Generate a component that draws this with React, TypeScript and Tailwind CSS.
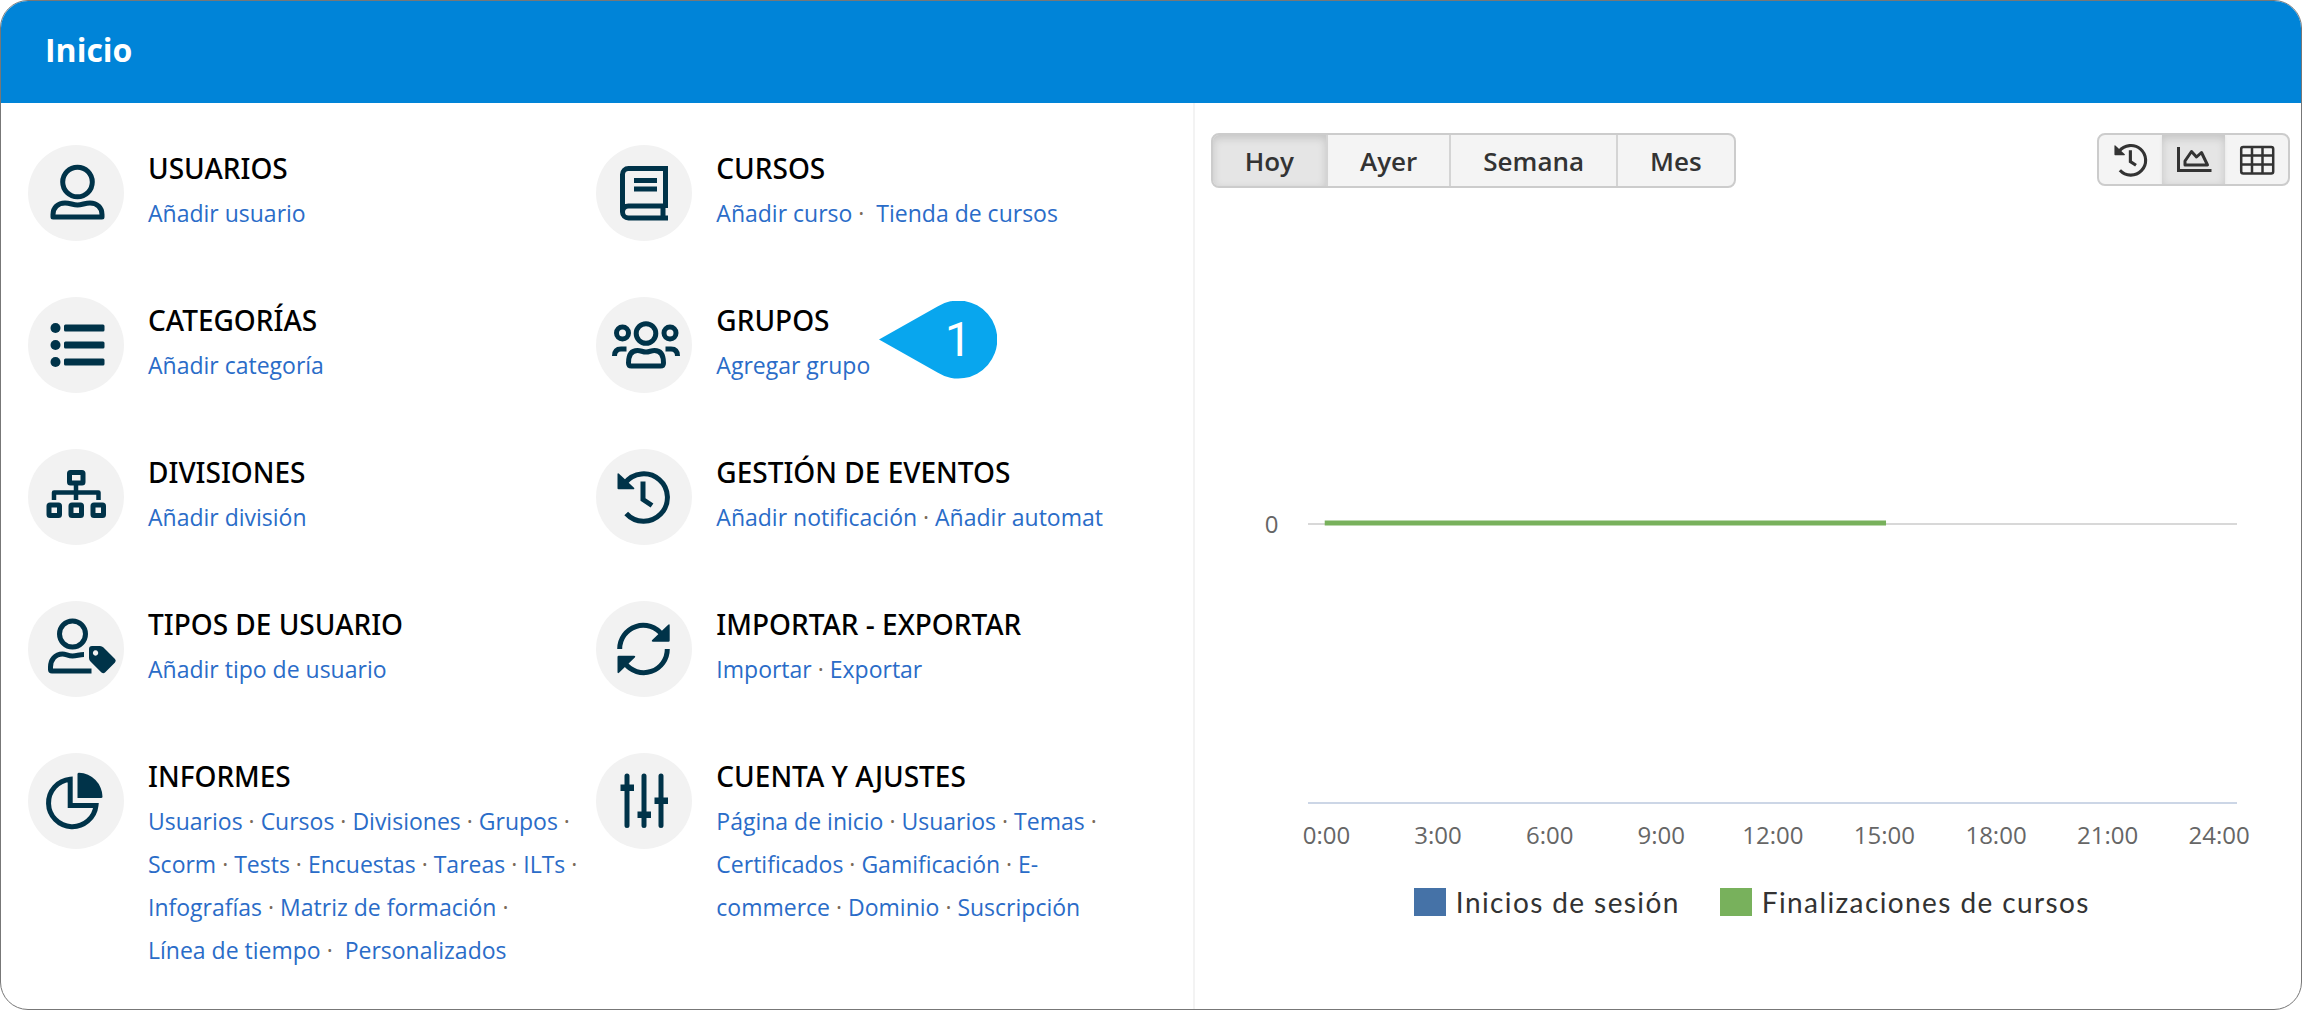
import { useState, type ReactNode } from "react";

/* ── Icons (96×96 grid, same size as the round badge) ─────── */

function Glyph({ children, className = "size-24" }: { children: ReactNode; className?: string }) {
  return (
    <svg viewBox="0 0 96 96" className={className} fill="none" stroke="currentColor" strokeWidth="5" aria-hidden="true">
      {children}
    </svg>
  );
}

const userIcon = (
  <Glyph>
    <circle cx="49.5" cy="37" r="14.8" />
    <path strokeLinejoin="round" d="M25 72h49v-2.500c0-7-5-11.500-12-11.500-5 0-8 2-12.500 2s-7.500-2-12.500-2c-7 0-12 4.500-12 11.500z" />
  </Glyph>
);

const listIcon = (
  <Glyph>
    <g fill="currentColor" stroke="none">
      <circle cx="27.500" cy="31" r="5" />
      <circle cx="27.500" cy="48" r="5" />
      <circle cx="27.500" cy="65" r="5" />
      <rect x="36" y="27.500" width="40.500" height="7" rx="1.500" />
      <rect x="36" y="44.500" width="40.500" height="7" rx="1.500" />
      <rect x="36" y="61.500" width="40.500" height="7" rx="1.500" />
    </g>
  </Glyph>
);

const sitemapIcon = (
  <Glyph>
    <rect x="41.500" y="23.500" width="13.500" height="10.500" rx="1" />
    <path strokeWidth="4.500" strokeLinejoin="round" d="M48 34v17M26 51v-7.500h44.500V51" />
    <rect x="21" y="56" width="10.500" height="10.500" rx="1" />
    <rect x="43" y="56" width="10.500" height="10.500" rx="1" />
    <rect x="65" y="56" width="10.500" height="10.500" rx="1" />
  </Glyph>
);

const userTagIcon = (
  <Glyph>
    <circle cx="44.500" cy="33" r="13" />
    <path d="M56 53.500c-5 0-7 1.500-11.500 1.500s-6.500-2-10-2c-7.500 0-12 6-12 13v2.500q0 1.500 1.500 1.500h39.500" />
    <path
      fill="currentColor"
      stroke="none"
      fillRule="evenodd"
      d="M61 48q0-3 3-3h8q2 0 3.500 1.500l11.500 11.500q1.500 1.500 0 3.500l-10 10q-1.500 1.500-3.500 0L62.500 60.500q-1.500-1.500-1.500-3.500zM67.500 49.300a2.700 2.700 0 1 0 .1 0z"
    />
  </Glyph>
);

const pieIcon = (
  <Glyph>
    <path d="M42.200 26.200A23.800 23.800 0 1 0 68 52.500H42.200z" />
    <path fill="currentColor" stroke="none" d="M51 19.700a24.500 24.500 0 0 1 23.500 24q0 1.300-1.500 1.300H49.500V21q0-1.300 1.500-1.300z" />
  </Glyph>
);

const bookIcon = (
  <Glyph>
    <path d="M69.500 63V23.500H32.500a6 6 0 0 0-6 6V67a6 6 0 0 0 6 6H72" />
    <path d="M26.500 67a6 6 0 0 1 6-6H69.500M67 61v12M38 35.500h23M38 44h23" />
  </Glyph>
);

const groupIcon = (
  <Glyph>
    <circle cx="50" cy="36.500" r="9.800" />
    <circle cx="26.500" cy="36" r="6" />
    <circle cx="74" cy="36" r="6" />
    <path
      strokeLinejoin="round"
      d="M32.500 66c0-8 3-12.500 9-12.500 3.500 0 5 1.500 8.500 1.500s5-1.500 8.500-1.500c6 0 9 4.500 9 12.500q0 3-3 3h-29q-3 0-3-3z"
    />
    <path d="M18.500 59c0-5 2.500-7 6.500-7h5.500M81.500 59c0-5-2.500-7-6.500-7h-5.500" />
  </Glyph>
);

function HistoryIcon({ className }: { className?: string }) {
  return (
    <Glyph className={className}>
      <path d="M29 34a23.700 23.700 0 1 1 1.200 30.500M47 32.500v18l9 6" />
      <path fill="currentColor" stroke="none" d="M21.500 25.500q0-2 1.500-.8l15 14q1 1.500-1 1.500H22.500q-1 0-1-1z" />
    </Glyph>
  );
}

const syncIcon = (
  <Glyph>
    <path d="M23.700 48a23.500 23.500 0 0 1 42.500-14M71.300 48a23.500 23.500 0 0 1-42.500 14" />
    <path
      fill="currentColor"
      stroke="none"
      d="M73.700 24.500v15q0 1.200-1.200 1.200H57q-2-.2-.8-1.700l16-15.300q1.500-1 1.500.8zM21.500 71v-15q0-1.200 1.200-1.200H38q2 .2.800 1.700l-15.800 15.300q-1.500 1-1.500-.8z"
    />
  </Glyph>
);

const slidersIcon = (
  <Glyph>
    <path strokeLinecap="round" d="M31 23v49.500M48 23v49.500M65 23v49.500" />
    <path strokeWidth="6.500" d="M24.500 34.700h13.500M41.500 61.700h13.500M58.500 47.700h13.500" />
  </Glyph>
);

const areaIcon = (
  <svg viewBox="0 0 36 30" className="h-[30px] w-9" fill="none" stroke="currentColor" strokeWidth="3" aria-hidden="true">
    <path d="M2.500 2v23.500H35.500" />
    <path strokeLinejoin="round" d="M9 20v-4l6.500-9.500L20.500 12l5-4.500L31.500 20z" />
  </svg>
);

const tableIcon = (
  <svg viewBox="0 0 36 30" className="h-[30px] w-9" fill="none" stroke="currentColor" strokeWidth="2.500" aria-hidden="true">
    <rect x="2.200" y="2" width="32" height="26.500" rx="2" />
    <path d="M2 10.500h32M2 19.500h32M13 2v26.500M23.500 2v26.500" />
  </svg>
);

/* ── Data ─────────────────────────────────────────────────── */

interface Section {
  title: string;
  icon: ReactNode;
  links: string[];
  // link that has an extra space in front of it
  wide?: string;
  step?: number;
}

const SECTIONS: Section[] = [
  { title: "USUARIOS", icon: userIcon, links: ["Añadir usuario"] },
  { title: "CURSOS", icon: bookIcon, links: ["Añadir curso", "Tienda de cursos"], wide: "Tienda de cursos" },
  { title: "CATEGORÍAS", icon: listIcon, links: ["Añadir categoría"] },
  { title: "GRUPOS", icon: groupIcon, links: ["Agregar grupo"], step: 1 },
  { title: "DIVISIONES", icon: sitemapIcon, links: ["Añadir división"] },
  { title: "GESTIÓN DE EVENTOS", icon: <HistoryIcon />, links: ["Añadir notificación", "Añadir automat"] },
  { title: "TIPOS DE USUARIO", icon: userTagIcon, links: ["Añadir tipo de usuario"] },
  { title: "IMPORTAR - EXPORTAR", icon: syncIcon, links: ["Importar", "Exportar"] },
  {
    title: "INFORMES",
    icon: pieIcon,
    links: [
      "Usuarios", "Cursos", "Divisiones", "Grupos", "Scorm", "Tests", "Encuestas", "Tareas",
      "ILTs", "Infografías", "Matriz de formación", "Línea\u00a0de\u00a0tiempo", "Personalizados",
    ],
    wide: "Personalizados",
  },
  {
    title: "CUENTA Y AJUSTES",
    icon: slidersIcon,
    links: [
      "Página de inicio", "Usuarios", "Temas", "Certificados", "Gamificación",
      "E-commerce", "Dominio", "Suscripción",
    ],
  },
];

const PERIODS = ["Hoy", "Ayer", "Semana", "Mes"];

const VIEWS = [
  { id: "historial", label: "Historial", icon: <HistoryIcon className="size-15" /> },
  { id: "grafico", label: "Gráfico", icon: areaIcon },
  { id: "tabla", label: "Tabla", icon: tableIcon },
];

const HOURS = ["0:00", "3:00", "6:00", "9:00", "12:00", "15:00", "18:00", "21:00", "24:00"];

/* ── Pieces ───────────────────────────────────────────────── */

function StepMarker({ step }: { step: number }) {
  return (
    <div className="absolute left-[163px] top-1 h-[78px] w-[118px]">
      <svg viewBox="0 0 118 78" className="size-full" aria-hidden="true">
        <path fill="#08a6ee" d="M0 38.500 58.500 5.500A39 39 0 1 1 58.500 71.500z" />
      </svg>
      <span className="absolute inset-y-0 right-0 flex w-[78px] items-center justify-center font-[Roboto,sans-serif] text-5xl text-white">
        {step}
      </span>
    </div>
  );
}

function SectionItem({ title, icon, links, wide, step }: Section) {
  return (
    <section className="flex gap-6 pb-6 pr-4">
      <div className="size-24 shrink-0 rounded-full bg-[#f2f2f2] text-[#003349]">{icon}</div>
      <div className="relative min-w-0">
        <h2 className="font-['Noto_Sans',sans-serif] text-[28px] leading-[47px] font-medium text-black">{title}</h2>
        <p className="text-[23px] leading-[43px] text-[#7a6a58]">
          {links.map((link, i) => (
            <span key={link}>
              {i > 0 && (link === wide ? "\u00a0· \u00a0" : "\u00a0· ")}
              <a href="#" className="text-[#2a6cc8] hover:underline">
                {link}
              </a>
            </span>
          ))}
        </p>
        {step && <StepMarker step={step} />}
      </div>
    </section>
  );
}

function ActivityChart() {
  return (
    <figure>
      <div className="flex items-center pl-[70px] pr-16">
        <span className="w-[43px] text-2xl leading-8 text-[#666]">0</span>
        <svg className="h-[560px] min-w-0 flex-1" role="img" aria-label="Actividad de hoy">
          <line x1="0" x2="100%" y1="50%" y2="50%" stroke="#d8d8d8" strokeWidth="2" />
          <line x1="1.800%" x2="62.200%" y1="279" y2="279" stroke="#78b15c" strokeWidth="5" />
          <line x1="0" x2="100%" y1="559" y2="559" stroke="#ccd6e6" strokeWidth="2" />
        </svg>
      </div>
      <div className="grid grid-cols-9 pl-[76px] pr-[26px] pt-3 text-center text-2xl leading-[38px] text-[#666]">
        {HOURS.map((hour) => (
          <span key={hour}>{hour}</span>
        ))}
      </div>
      <figcaption className="flex justify-center gap-10 pl-2 pt-7 font-[Lato,sans-serif] text-[28px] leading-10 tracking-wider text-[#333]">
        <span className="flex items-center gap-2.5">
          <i className="h-7 w-8 bg-[#4572a7]" />
          Inicios de sesión
        </span>
        <span className="flex items-center gap-2.5">
          <i className="h-7 w-8 bg-[#78b15c]" />
          Finalizaciones de cursos
        </span>
      </figcaption>
    </figure>
  );
}

const PRESSED = "bg-[#e5e5e5] shadow-[inset_0_3px_8px_rgba(0,0,0,0.15),0_1px_3px_rgba(0,0,0,0.08)]";

export default function App() {
  const [period, setPeriod] = useState("Hoy");
  const [view, setView] = useState("grafico");

  return (
    <div className="flex min-h-screen flex-col overflow-hidden rounded-[28px] border border-[#777] bg-white font-['Open_Sans',sans-serif]">
      {/* Title bar */}
      <header className="flex h-[102px] items-center bg-[#0084d8] px-11 pb-1">
        <h1 className="text-[32px] leading-10 font-bold text-white">Inicio</h1>
      </header>

      <div className="flex flex-1">
        {/* Shortcuts */}
        <main className="grid w-[51.9%] shrink-0 grid-cols-2 content-start gap-y-8 border-r-2 border-[#f3f3f3] pt-[42px] pl-[27px] pr-7">
          {SECTIONS.map((section) => (
            <SectionItem key={section.title} {...section} />
          ))}
        </main>

        {/* Activity */}
        <aside className="min-w-0 flex-1 pt-[30px]">
          <div className="mb-14 flex items-start justify-between pr-[11px] pl-4">
            <div className="flex overflow-hidden rounded-lg border-2 border-[#ccc] bg-[#f4f4f4]">
              {PERIODS.map((name) => (
                <button
                  key={name}
                  type="button"
                  aria-pressed={period === name}
                  onClick={() => setPeriod(name)}
                  className={`h-[51px] border-l-2 border-[#d4d4d4] px-8 text-[26px] leading-8 font-semibold text-[#333] first:border-l-0 ${
                    period === name ? PRESSED : ""
                  }`}
                >
                  {name}
                </button>
              ))}
            </div>

            <div className="flex overflow-hidden rounded-lg border-2 border-[#ccc] bg-[#f4f4f4]">
              {VIEWS.map(({ id, label, icon }) => (
                <button
                  key={id}
                  type="button"
                  aria-label={label}
                  aria-pressed={view === id}
                  onClick={() => setView(id)}
                  className={`flex h-[49px] w-[63px] items-center justify-center text-[#333] ${view === id ? PRESSED : ""}`}
                >
                  {icon}
                </button>
              ))}
            </div>
          </div>

          <ActivityChart />
        </aside>
      </div>
    </div>
  );
}
